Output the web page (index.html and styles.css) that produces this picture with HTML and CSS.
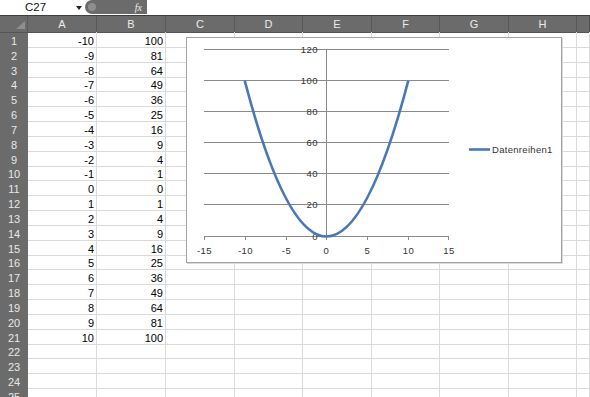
FILE: index.html
```html
<!DOCTYPE html>
<html>
<head>
<meta charset="utf-8">
<link rel="stylesheet" href="styles.css">
</head>
<body>
<div class="topbar">
  <div class="namebox"><span class="ref">C27</span><span class="arrow"></span></div>
  <div class="fxbar"><span class="knob"></span><span class="fx">fx</span></div>
</div>
<div class="sheet">
  <div class="row head"><div class="corner"></div><div class="ch">A</div><div class="ch">B</div><div class="ch">C</div><div class="ch">D</div><div class="ch">E</div><div class="ch">F</div><div class="ch">G</div><div class="ch">H</div><div class="ch"></div></div>
  <div class="row"><div class="rh">1</div><div class="c n">-10</div><div class="c n">100</div><div class="c"></div><div class="c"></div><div class="c"></div><div class="c"></div><div class="c"></div><div class="c"></div><div class="c"></div></div>
  <div class="row"><div class="rh">2</div><div class="c n">-9</div><div class="c n">81</div><div class="c"></div><div class="c"></div><div class="c"></div><div class="c"></div><div class="c"></div><div class="c"></div><div class="c"></div></div>
  <div class="row"><div class="rh">3</div><div class="c n">-8</div><div class="c n">64</div><div class="c"></div><div class="c"></div><div class="c"></div><div class="c"></div><div class="c"></div><div class="c"></div><div class="c"></div></div>
  <div class="row"><div class="rh">4</div><div class="c n">-7</div><div class="c n">49</div><div class="c"></div><div class="c"></div><div class="c"></div><div class="c"></div><div class="c"></div><div class="c"></div><div class="c"></div></div>
  <div class="row"><div class="rh">5</div><div class="c n">-6</div><div class="c n">36</div><div class="c"></div><div class="c"></div><div class="c"></div><div class="c"></div><div class="c"></div><div class="c"></div><div class="c"></div></div>
  <div class="row"><div class="rh">6</div><div class="c n">-5</div><div class="c n">25</div><div class="c"></div><div class="c"></div><div class="c"></div><div class="c"></div><div class="c"></div><div class="c"></div><div class="c"></div></div>
  <div class="row"><div class="rh">7</div><div class="c n">-4</div><div class="c n">16</div><div class="c"></div><div class="c"></div><div class="c"></div><div class="c"></div><div class="c"></div><div class="c"></div><div class="c"></div></div>
  <div class="row"><div class="rh">8</div><div class="c n">-3</div><div class="c n">9</div><div class="c"></div><div class="c"></div><div class="c"></div><div class="c"></div><div class="c"></div><div class="c"></div><div class="c"></div></div>
  <div class="row"><div class="rh">9</div><div class="c n">-2</div><div class="c n">4</div><div class="c"></div><div class="c"></div><div class="c"></div><div class="c"></div><div class="c"></div><div class="c"></div><div class="c"></div></div>
  <div class="row"><div class="rh">10</div><div class="c n">-1</div><div class="c n">1</div><div class="c"></div><div class="c"></div><div class="c"></div><div class="c"></div><div class="c"></div><div class="c"></div><div class="c"></div></div>
  <div class="row"><div class="rh">11</div><div class="c n">0</div><div class="c n">0</div><div class="c"></div><div class="c"></div><div class="c"></div><div class="c"></div><div class="c"></div><div class="c"></div><div class="c"></div></div>
  <div class="row"><div class="rh">12</div><div class="c n">1</div><div class="c n">1</div><div class="c"></div><div class="c"></div><div class="c"></div><div class="c"></div><div class="c"></div><div class="c"></div><div class="c"></div></div>
  <div class="row"><div class="rh">13</div><div class="c n">2</div><div class="c n">4</div><div class="c"></div><div class="c"></div><div class="c"></div><div class="c"></div><div class="c"></div><div class="c"></div><div class="c"></div></div>
  <div class="row"><div class="rh">14</div><div class="c n">3</div><div class="c n">9</div><div class="c"></div><div class="c"></div><div class="c"></div><div class="c"></div><div class="c"></div><div class="c"></div><div class="c"></div></div>
  <div class="row"><div class="rh">15</div><div class="c n">4</div><div class="c n">16</div><div class="c"></div><div class="c"></div><div class="c"></div><div class="c"></div><div class="c"></div><div class="c"></div><div class="c"></div></div>
  <div class="row"><div class="rh">16</div><div class="c n">5</div><div class="c n">25</div><div class="c"></div><div class="c"></div><div class="c"></div><div class="c"></div><div class="c"></div><div class="c"></div><div class="c"></div></div>
  <div class="row"><div class="rh">17</div><div class="c n">6</div><div class="c n">36</div><div class="c"></div><div class="c"></div><div class="c"></div><div class="c"></div><div class="c"></div><div class="c"></div><div class="c"></div></div>
  <div class="row"><div class="rh">18</div><div class="c n">7</div><div class="c n">49</div><div class="c"></div><div class="c"></div><div class="c"></div><div class="c"></div><div class="c"></div><div class="c"></div><div class="c"></div></div>
  <div class="row"><div class="rh">19</div><div class="c n">8</div><div class="c n">64</div><div class="c"></div><div class="c"></div><div class="c"></div><div class="c"></div><div class="c"></div><div class="c"></div><div class="c"></div></div>
  <div class="row"><div class="rh">20</div><div class="c n">9</div><div class="c n">81</div><div class="c"></div><div class="c"></div><div class="c"></div><div class="c"></div><div class="c"></div><div class="c"></div><div class="c"></div></div>
  <div class="row"><div class="rh">21</div><div class="c n">10</div><div class="c n">100</div><div class="c"></div><div class="c"></div><div class="c"></div><div class="c"></div><div class="c"></div><div class="c"></div><div class="c"></div></div>
  <div class="row"><div class="rh">22</div><div class="c"></div><div class="c"></div><div class="c"></div><div class="c"></div><div class="c"></div><div class="c"></div><div class="c"></div><div class="c"></div><div class="c"></div></div>
  <div class="row"><div class="rh">23</div><div class="c"></div><div class="c"></div><div class="c"></div><div class="c"></div><div class="c"></div><div class="c"></div><div class="c"></div><div class="c"></div><div class="c"></div></div>
  <div class="row"><div class="rh">24</div><div class="c"></div><div class="c"></div><div class="c"></div><div class="c"></div><div class="c"></div><div class="c"></div><div class="c"></div><div class="c"></div><div class="c"></div></div>
  <div class="row"><div class="rh">25</div><div class="c"></div><div class="c"></div><div class="c"></div><div class="c"></div><div class="c"></div><div class="c"></div><div class="c"></div><div class="c"></div><div class="c"></div></div>

  <div class="chart">
    <svg class="plot" width="374" height="224" viewBox="0 0 374 224">
      <g class="grid">
        <line x1="17" y1="11.5" x2="262" y2="11.5"/>
        <line x1="17" y1="42.5" x2="262" y2="42.5"/>
        <line x1="17" y1="73.5" x2="262" y2="73.5"/>
        <line x1="17" y1="104.5" x2="262" y2="104.5"/>
        <line x1="17" y1="135.5" x2="262" y2="135.5"/>
        <line x1="17" y1="166.5" x2="262" y2="166.5"/>
        <line x1="17" y1="198.5" x2="262" y2="198.5"/>
        <line x1="139.5" y1="11" x2="139.5" y2="198"/>
        <line x1="17.5" y1="198" x2="17.5" y2="202"/>
        <line x1="58.5" y1="198" x2="58.5" y2="202"/>
        <line x1="99.5" y1="198" x2="99.5" y2="202"/>
        <line x1="139.5" y1="198" x2="139.5" y2="202"/>
        <line x1="180.5" y1="198" x2="180.5" y2="202"/>
        <line x1="221.5" y1="198" x2="221.5" y2="202"/>
        <line x1="261.5" y1="198" x2="261.5" y2="202"/>
      </g>
      <g class="ylab">
        <text x="131" y="14.8">120</text>
        <text x="131" y="45.8">100</text>
        <text x="131" y="76.8">80</text>
        <text x="131" y="107.8">60</text>
        <text x="131" y="138.8">40</text>
        <text x="131" y="169.8">20</text>
        <text x="131" y="201.8">0</text>
      </g>
      <g class="xlab">
        <text x="17.5" y="215.5">-15</text>
        <text x="58.5" y="215.5">-10</text>
        <text x="99.5" y="215.5">-5</text>
        <text x="139.5" y="215.5">0</text>
        <text x="180.5" y="215.5">5</text>
        <text x="221.5" y="215.5">10</text>
        <text x="262" y="215.5">15</text>
      </g>
      <path class="curve" d="M57.7 42.7 Q139.5 354.3 221.3 42.7"/>
      <line class="legline" x1="282" y1="111.5" x2="303" y2="111.5"/>
      <text class="legtext" x="305" y="114.8">Datenreihen1</text>
    </svg>
  </div>
</div>
</body>
</html>
```

FILE: styles.css
```css
* { box-sizing: border-box; margin: 0; padding: 0; }
html, body { width: 590px; height: 397px; overflow: hidden; background: #fff; }
body { font-family: "Liberation Sans", Arial, sans-serif; font-size: 11px; color: #000; }

.topbar { height: 15px; display: flex; align-items: stretch; background: #fff; }
.namebox { width: 85px; display: flex; align-items: center; padding-left: 25px; }
.namebox .ref { line-height: 15px; font-size: 11.5px; color: #111; }
.namebox .arrow { margin-left: 30px; width: 0; height: 0; border-left: 3px solid transparent; border-right: 3px solid transparent; border-top: 4px solid #222; }
.fxbar { width: 62px; height: 14px; background: #6b6b6b; border-radius: 7px 0 0 7px; display: flex; align-items: center; padding-left: 3px; }
.fxbar .knob { width: 8px; height: 8px; border-radius: 50%; background: #8e8e8e; }
.fxbar .fx { margin-left: auto; padding-right: 5px; font-family: "Liberation Serif", serif; font-style: italic; font-size: 10px; color: #eeeeee; }

.sheet { position: relative; border-top: 1px solid #3e3e3e; }
.row { display: grid; grid-template-columns: 28px 69px 69px 69px 68px 69px 68px 69px 68px 1fr; height: 14.83px; }
.row.head { height: 16px; }

.corner { background: #6b6b6b; border-right: 1px solid #5a5a5a; border-bottom: 1px solid #555; position: relative; }
.corner::after { content: ""; position: absolute; right: 2px; bottom: 3px; width: 0; height: 0; border-left: 9px solid transparent; border-bottom: 8px solid #8f8f8f; }
.ch { background: #6b6b6b; color: #ececec; text-align: center; line-height: 15px; padding-top: 1px; border-right: 1px solid #585858; border-bottom: 1px solid #555; }

.rh { background: #6b6b6b; color: #e8e8e8; text-align: center; line-height: 12px; padding-top: 3px; border-bottom: 1px solid #858585; }
.c { border-right: 1px solid #dadada; border-bottom: 1px solid #dadada; line-height: 12px; padding-top: 3px; }
.c.n { text-align: right; padding-right: 2px; }

.chart { position: absolute; left: 186px; top: 21px; width: 376px; height: 226px; border: 1px solid #a3a3a3; background: #fff; box-shadow: 1px 1px 0 #d8d8d8; }
.plot { display: block; }
.grid line { stroke: #8a8a8a; stroke-width: 1; }
.ylab text, .xlab text, .legtext { font-family: "Liberation Sans", Arial, sans-serif; font-size: 9.5px; fill: #333; letter-spacing: 0.5px; }
.ylab text { text-anchor: end; }
.xlab text { text-anchor: middle; }
.legtext { letter-spacing: 0.3px; }
.curve { fill: none; stroke: #4a78b4; stroke-width: 2.6; }
.legline { stroke: #4a78b4; stroke-width: 2.6; }
```
